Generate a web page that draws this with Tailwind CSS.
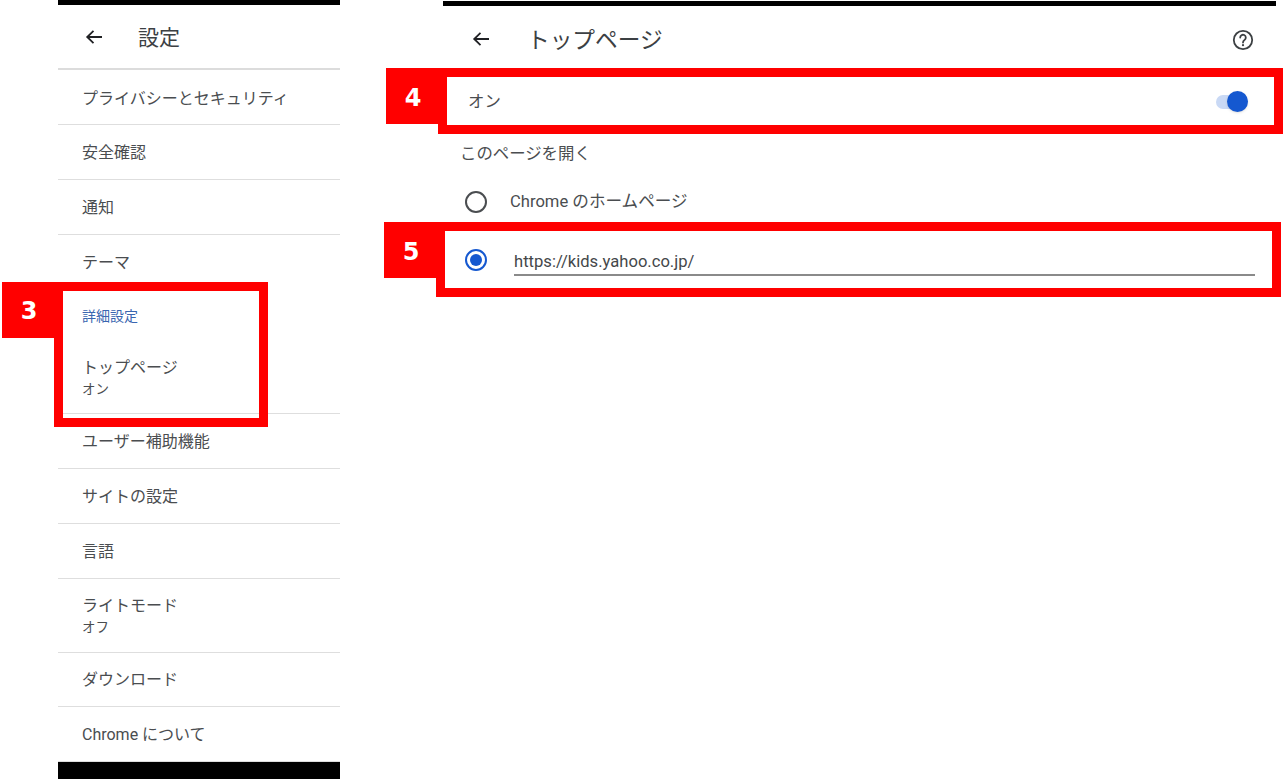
<!DOCTYPE html>
<html lang="ja">
<head>
<meta charset="utf-8">
<script src="https://cdn.jsdelivr.net/npm/@tailwindcss/browser@4"></script>
</head>
<body class="bg-white">
<div class="relative h-[779px] w-[1283px] overflow-hidden bg-white font-['Roboto','Noto_Sans_CJK_JP',sans-serif] text-[#4a4d50]">
  <div class="flex h-full">
    <!-- left phone -->
    <section class="ml-[58px] flex h-full w-[282px] flex-col">
      <div class="h-[5px] shrink-0 bg-black"></div>
      <header class="flex h-[65px] shrink-0 items-center border-b-2 border-[#dcdcdc] pt-[1px]">
        <svg class="ml-[24px] h-[24px] w-[24px]" viewBox="0 0 24 24" fill="none" stroke="#202124" stroke-width="1.8"><path d="M20 12H5.5M11.5 5.8 5.2 12l6.3 6.2"/></svg>
        <h1 class="mt-[2px] ml-[32px] text-[21px] leading-none text-[#3c4043]">設定</h1>
      </header>
      <ul class="flex flex-1 flex-col text-[16px]">
        <li class="flex h-[55px] items-center border-b border-[#dedede] pt-[3px] pl-[24px]">プライバシーとセキュリティ</li>
        <li class="flex h-[55px] items-center border-b border-[#dedede] pt-[2px] pl-[24px]">安全確認</li>
        <li class="flex h-[55px] items-center border-b border-[#dedede] pt-[2px] pl-[24px]">通知</li>
        <li class="flex h-[55px] items-center pl-[24px]">テーマ</li>
        <li class="flex h-[54px] items-center pb-[2px] pl-[24px] text-[14px] text-[#3a66b0]">詳細設定</li>
        <li class="flex h-[70px] flex-col justify-center border-b border-[#dedede] pb-[1px] pl-[24px]">
          <span class="leading-[20px]">トップページ</span><span class="mt-[2px] text-[13.5px] leading-[18px]">オン</span>
        </li>
        <li class="flex h-[55px] items-center border-b border-[#dedede] pt-[2px] pl-[24px]">ユーザー補助機能</li>
        <li class="flex h-[55px] items-center border-b border-[#dedede] pt-[2px] pl-[24px]">サイトの設定</li>
        <li class="flex h-[55px] items-center border-b border-[#dedede] pt-[2px] pl-[24px]">言語</li>
        <li class="flex h-[74px] flex-col justify-center border-b border-[#dedede] pt-[1px] pl-[24px]">
          <span class="leading-[20px]">ライトモード</span><span class="mt-[1px] text-[13.5px] leading-[20px]">オフ</span>
        </li>
        <li class="flex h-[54px] items-center border-b border-[#dedede] pl-[24px]">ダウンロード</li>
        <li class="flex h-[55px] items-center border-b border-[#dedede] pt-[1px] pl-[24px]">Chrome について</li>
      </ul>
      <div class="h-[17px] shrink-0 bg-black"></div>
    </section>
    <!-- right phone -->
    <section class="ml-[103px] flex h-full w-[833px] flex-col">
      <div class="mt-[1px] h-[5px] shrink-0 bg-black"></div>
      <header class="flex h-[62px] shrink-0 items-center pt-[4px] pr-[21px]">
        <svg class="ml-[26px] h-[24px] w-[24px]" viewBox="0 0 24 24" fill="none" stroke="#202124" stroke-width="1.8"><path d="M20 12H5.5M11.5 5.8 5.2 12l6.3 6.2"/></svg>
        <h2 class="mt-[4px] ml-[34px] flex-1 text-[22.7px] leading-none text-[#3c4043]">トップページ</h2>
        <svg class="mt-[2px] h-[24px] w-[24px]" viewBox="0 0 24 24" fill="none" stroke="#3c4043" stroke-width="1.8"><circle cx="12" cy="12" r="9.2"/><path d="M9.2 9.6a2.8 2.8 0 1 1 4.5 2.2c-1 .8-1.7 1.3-1.7 2.7" stroke-linecap="round"/><circle cx="12" cy="17.2" r="1.1" fill="#3c4043" stroke="none"/></svg>
      </header>
      <div class="flex h-[66px] shrink-0 items-center pt-[3px] pr-[28px] pl-[25px]">
        <span class="flex-1 text-[16.4px]">オン</span>
        <span class="relative mb-[2px] block h-[14px] w-[32px] rounded-full bg-[#c9d9f5]">
          <span class="absolute top-[-4px] right-0 block h-[21px] w-[21px] rounded-full bg-[#1558d0] shadow-sm"></span>
        </span>
      </div>
      <p class="mt-[8px] pl-[17px] text-[16.4px] leading-[24px]">このページを開く</p>
      <div class="mt-[24px] flex h-[24px] items-center pl-[22px]">
        <span class="block h-[22px] w-[22px] rounded-full border-2 border-[#4a4d50]"></span>
        <span class="ml-[23px] text-[16.6px]">Chrome のホームページ</span>
      </div>
      <div class="mt-[35px] flex items-start pr-[21px] pl-[22px]">
        <span class="flex h-[22px] w-[22px] shrink-0 items-center justify-center rounded-full border-2 border-[#1558d0]"><span class="block h-[12px] w-[12px] rounded-full bg-[#1558d0]"></span></span>
        <span class="ml-[27px] flex-1 border-b-2 border-[#8a8a8a] pt-[1px] text-[16.6px] leading-[24px] text-[#44474a]">https://kids.yahoo.co.jp/</span>
      </div>
    </section>
  </div>

  <!-- annotations -->
  <div class="absolute top-[282px] left-[54px] h-[145px] w-[214px] border-[9px] border-[#ff0000]"></div>
  <div class="absolute top-[282px] left-[2px] flex h-[56px] w-[52px] items-center justify-center bg-[#ff0000] pt-[2px] pl-[2px] font-['DejaVu_Sans'] text-[24px] font-bold text-white">3</div>
  <div class="absolute top-[68px] left-[438px] h-[66px] w-[845px] border-[9px] border-[#ff0000]"></div>
  <div class="absolute top-[68px] left-[386px] flex h-[56px] w-[52px] items-center justify-center bg-[#ff0000] pt-[3px] pl-[2px] font-['DejaVu_Sans'] text-[24px] font-bold text-white">4</div>
  <div class="absolute top-[222px] left-[436px] h-[75px] w-[845px] border-[9px] border-[#ff0000]"></div>
  <div class="absolute top-[222px] left-[384px] flex h-[56px] w-[52px] items-center justify-center bg-[#ff0000] pt-[3px] pl-[2px] font-['DejaVu_Sans'] text-[24px] font-bold text-white">5</div>
</div>
</body>
</html>
